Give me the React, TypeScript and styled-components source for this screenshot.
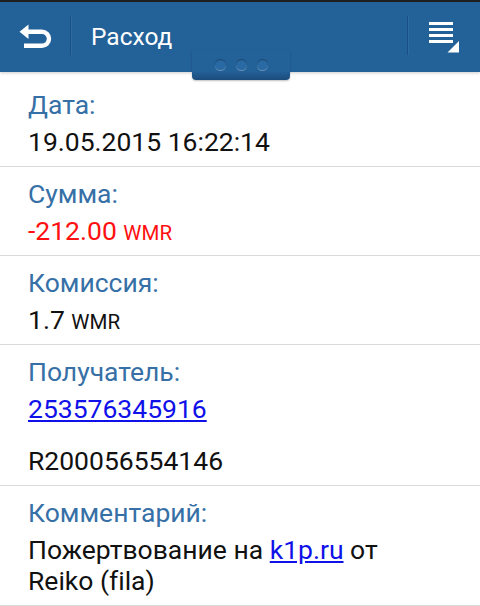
import styled, { createGlobalStyle } from 'styled-components';

const GlobalStyle = createGlobalStyle`
    html, body {
        margin: 0;
        padding: 0;
        background: #ffffff;
    }
    body {
        font-family: Roboto, "Liberation Sans", sans-serif;
        font-variant-ligatures: none;
        -webkit-font-smoothing: antialiased;
    }
`;

const Screen = styled.div`
    width: 480px;
    height: 606px;
    overflow: hidden;
    background: #ffffff;
`;

const ActionBar = styled.header`
    position: relative;
    display: flex;
    align-items: center;
    height: 70px;
    border-top: 2px solid #1e1e1e;
    background: #236199;
    box-shadow: 0 1px 3px rgba(0, 0, 0, 0.2);
    z-index: 1;
`;

const IconButton = styled.div<{ $width: number }>`
    display: flex;
    align-items: center;
    justify-content: center;
    width: ${(p) => p.$width}px;
    height: 100%;
    flex-shrink: 0;
`;

const Divider = styled.div`
    width: 1px;
    height: 39px;
    margin-top: -3px;
    background: #1b5086;
    box-shadow: 1px 0 0 rgba(255, 255, 255, 0.06);
    flex-shrink: 0;
`;

const Title = styled.h1`
    flex: 1;
    margin: 0 0 0 20px;
    padding-bottom: 1px;
    font-family: Roboto, "Liberation Sans", sans-serif;
    font-weight: 400;
    font-size: 24.5px;
    color: #ffffff;
`;

const PagerTab = styled.div`
    position: absolute;
    left: 192px;
    top: 48px;
    width: 98px;
    height: 30px;
    display: flex;
    align-items: flex-start;
    justify-content: center;
    gap: 10px;
    padding-top: 9px;
    box-sizing: border-box;
    border-radius: 0 0 4px 4px;
    background: linear-gradient(#236199 0%, #236199 70%, #1b4c7b 100%);
    box-shadow: 0 1px 2px rgba(0, 0, 0, 0.25);
`;

const Dot = styled.span`
    width: 11px;
    height: 11px;
    border-radius: 50%;
    background: #2a6aa4;
    box-shadow: inset 0 1px 1px rgba(0, 0, 0, 0.35), 0 1px 0 rgba(255, 255, 255, 0.3);
`;

const Details = styled.main`
    padding-top: 6px;
`;

const Section = styled.section`
    padding: 11px 40px 9px 28px;
    border-bottom: 1px solid #d9d9d9;
`;

const Label = styled.div`
    font-size: 26.5px;
    line-height: 31px;
    color: #3670a6;
    margin-bottom: 6px;
`;

const Value = styled.div<{ $extra?: boolean }>`
    font-size: 26.5px;
    line-height: 31px;
    color: #111111;
    margin-top: ${(p) => (p.$extra ? '21px' : '0')};
`;

const Amount = styled.span<{ $negative?: boolean }>`
    color: ${(p) => (p.$negative ? '#ff1010' : '#111111')};
`;

const Currency = styled.span`
    font-size: 20.5px;
    line-height: 1;
`;

const Link = styled.a`
    color: #1010e8;
    text-decoration: underline;
`;

type Field = {
    label: string;
    lines: React.ReactNode[];
};

const Money = ({ amount, negative }: { amount: string; negative?: boolean }) => (
    <Amount $negative={negative}>
        {amount} <Currency>WMR</Currency>
    </Amount>
);

const BackIcon = () => (
    <svg width="40" height="30" viewBox="14 22 40 30">
        <path
            d="M25 31.8 H41 A6.6 6.6 0 0 1 41 45.8 H23"
            fill="none"
            stroke="#ffffff"
            strokeWidth="4.4"
        />
        <polygon points="18.5,31.8 27.5,24.6 27.5,39" fill="#ffffff" />
    </svg>
);

const MenuIcon = () => (
    <svg width="34" height="34" viewBox="426 20 34 34">
        <rect x="428" y="22" width="24" height="3" fill="#ffffff" />
        <rect x="428" y="28" width="24" height="3" fill="#ffffff" />
        <rect x="428" y="34" width="24" height="3" fill="#ffffff" />
        <rect x="428" y="40" width="24" height="3" fill="#ffffff" />
        <polygon points="458,41 458,52.5 446.5,52.5" fill="#ffffff" />
    </svg>
);

const App = () => {
    const fields: Field[] = [
        { label: 'Дата:', lines: ['19.05.2015 16:22:14'] },
        { label: 'Сумма:', lines: [<Money amount="-212.00" negative />] },
        { label: 'Комиссия:', lines: [<Money amount="1.7" />] },
        {
            label: 'Получатель:',
            lines: [<Link href="#">253576345916</Link>, 'R200056554146'],
        },
        {
            label: 'Комментарий:',
            lines: [
                <>
                    Пожертвование на <Link href="#">k1p.ru</Link> от Reiko (fila)
                </>,
            ],
        },
    ];

    return (
        <>
            <GlobalStyle />
            <Screen>
                <ActionBar>
                    <IconButton $width={70}>
                        <BackIcon />
                    </IconButton>
                    <Divider />
                    <Title>Расход</Title>
                    <Divider />
                    <IconButton $width={72}>
                        <MenuIcon />
                    </IconButton>
                    <PagerTab>
                        <Dot />
                        <Dot />
                        <Dot />
                    </PagerTab>
                </ActionBar>
                <Details>
                    {fields.map((field) => (
                        <Section key={field.label}>
                            <Label>{field.label}</Label>
                            {field.lines.map((line, i) => (
                                <Value key={i} $extra={i > 0}>
                                    {line}
                                </Value>
                            ))}
                        </Section>
                    ))}
                </Details>
            </Screen>
        </>
    );
};

export default App;
